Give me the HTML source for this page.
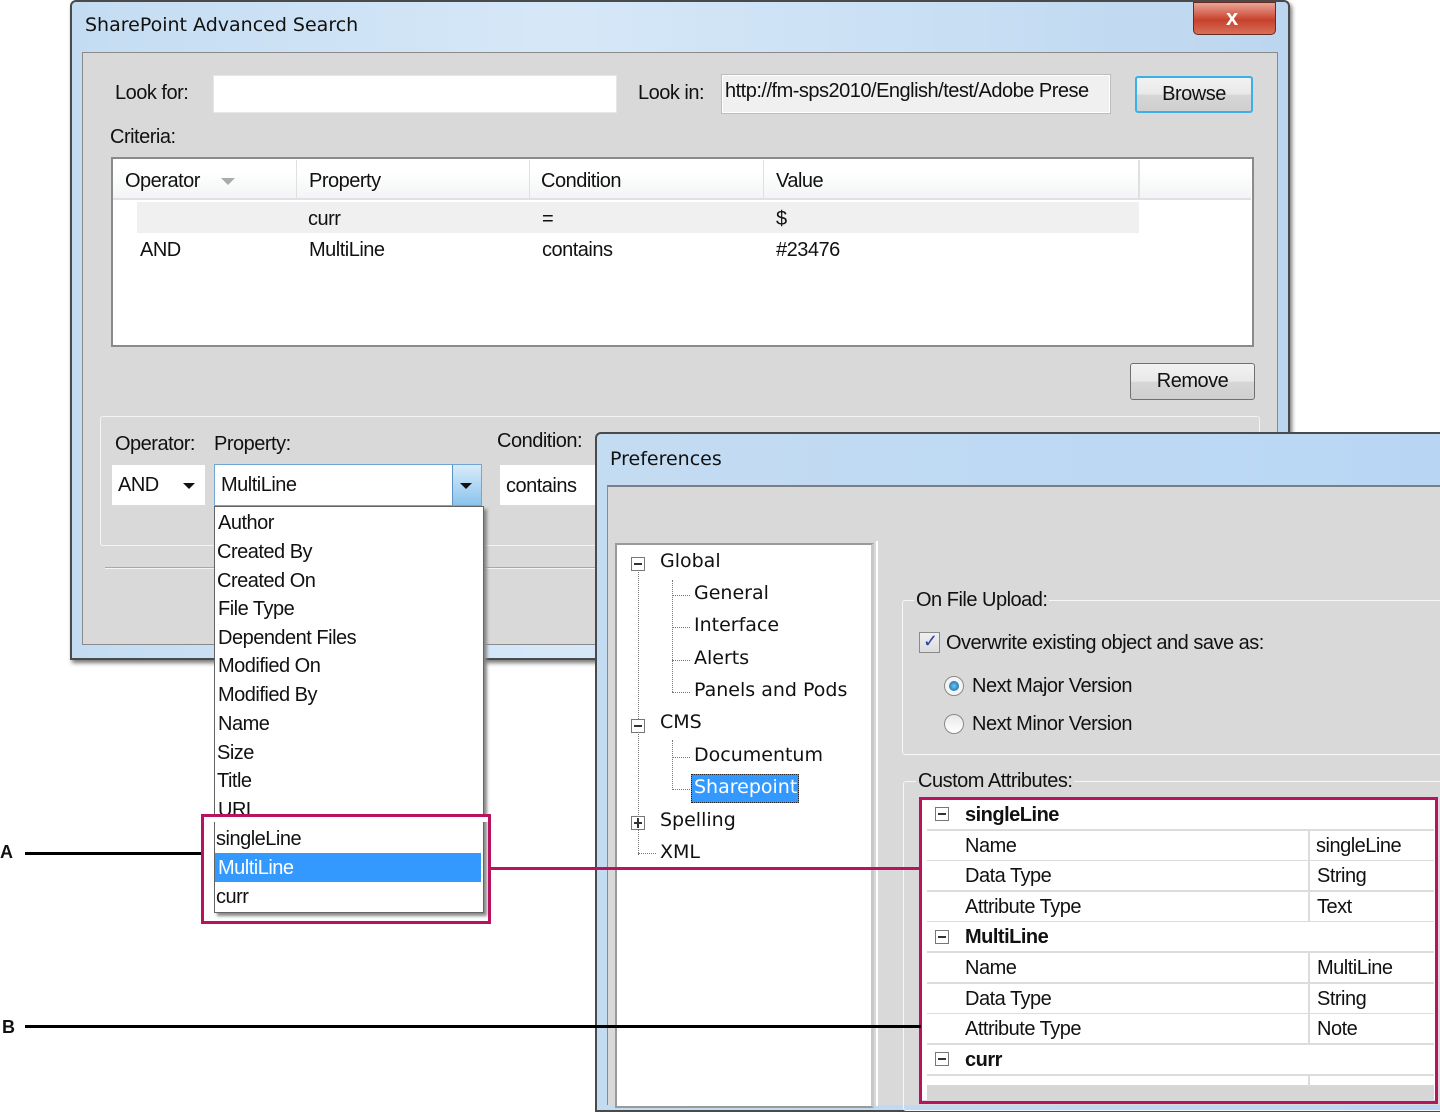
<!DOCTYPE html>
<html><head><meta charset="utf-8">
<style>
*{margin:0;padding:0;box-sizing:border-box}
body{width:1440px;height:1104px;background:#fff;position:relative;overflow:hidden;font-family:"Liberation Sans",sans-serif;font-size:20px;color:#111;letter-spacing:-0.5px}
.a{position:absolute}
.t{position:absolute;white-space:nowrap;line-height:1}
.w{background:#fff}
.btn{position:absolute;border:1px solid #707070;border-radius:3px;background:linear-gradient(#f2f2f2,#e8e8e8 50%,#d6d6d6 51%,#cfcfcf);text-align:center}
.tree{font-family:"DejaVu Sans",sans-serif;font-size:19px;letter-spacing:0;color:#111}
.row{position:absolute;left:927px;width:507px;height:31px;border-bottom:2px solid #dcdcdc;background:#fff}
.pm{position:absolute;width:14px;height:14px;border:1px solid #777;background:#fff}
.pm:after{content:"";position:absolute;left:2px;top:5px;width:8px;height:2px;background:#333}
</style></head><body>

<!-- Search window -->
<div class="a" style="left:70px;top:0;width:1220px;height:660px;background:linear-gradient(90deg,#c4dcf2,#d6e8f8 40%,#bcd6ef);border:2px solid #4a4a4a;border-radius:6px 6px 0 0;box-shadow:2px 3px 4px #777"></div>
<div class="t" style="left:85px;top:16px;letter-spacing:0;font-family:'DejaVu Sans',sans-serif;font-size:19px">SharePoint Advanced Search</div>
<div class="a" style="left:1193px;top:2px;width:83px;height:33px;border:1px solid #6b2a20;border-radius:0 0 5px 5px;background:linear-gradient(#e9a597,#c8412c 55%,#d5705a)"></div>
<div class="t" style="left:1226px;top:7px;color:#fff;font-weight:bold;font-size:22px">x</div>
<div class="a" style="left:82px;top:52px;width:1196px;height:593px;background:#d9d9d9;border:1px solid #8a8a8a"></div>

<div class="t" style="left:115px;top:83px">Look for:</div>
<div class="a w" style="left:213px;top:75px;width:404px;height:38px;border:1px solid #e6e6e6"></div>
<div class="t" style="left:638px;top:83px">Look in:</div>
<div class="a" style="left:722px;top:75px;width:388px;height:38px;background:#f0f0f0;border:1px solid #fff;outline:1px solid #bdbdbd"></div>
<div class="t" style="left:725px;top:81px;width:382px;overflow:hidden">http://fm-sps2010/English/test/Adobe Prese</div>
<div class="btn" style="left:1135px;top:76px;width:118px;height:37px;border:2px solid #3bb0e8;line-height:33px">Browse</div>
<div class="t" style="left:110px;top:127px">Criteria:</div>

<div class="a w" style="left:111px;top:157px;width:1143px;height:190px;border:2px solid #8a8a8a"></div>
<div class="a" style="left:113px;top:160px;width:1138px;height:40px;background:linear-gradient(#fff 30%,#f3f4f6);border-bottom:2px solid #dfe1e5"></div>
<div class="a" style="left:296px;top:160px;width:1px;height:40px;background:#e0e0e0"></div>
<div class="a" style="left:529px;top:160px;width:1px;height:40px;background:#e0e0e0"></div>
<div class="a" style="left:763px;top:160px;width:1px;height:40px;background:#e0e0e0"></div>
<div class="a" style="left:1138px;top:160px;width:2px;height:40px;background:#e0e0e0"></div>
<div class="t" style="left:125px;top:171px">Operator</div>
<div class="a" style="left:221px;top:178px;border:7px solid transparent;border-top:7px solid #aaa"></div>
<div class="t" style="left:309px;top:171px">Property</div>
<div class="t" style="left:541px;top:171px">Condition</div>
<div class="t" style="left:776px;top:171px">Value</div>
<div class="a" style="left:137px;top:202px;width:1002px;height:31px;background:#f0f0f0"></div>
<div class="t" style="left:308px;top:209px">curr</div>
<div class="t" style="left:542px;top:209px">=</div>
<div class="t" style="left:776px;top:209px">$</div>
<div class="t" style="left:140px;top:240px">AND</div>
<div class="t" style="left:309px;top:240px">MultiLine</div>
<div class="t" style="left:542px;top:240px">contains</div>
<div class="t" style="left:776px;top:240px">#23476</div>

<div class="btn" style="left:1130px;top:363px;width:125px;height:37px;line-height:35px">Remove</div>

<div class="a" style="left:100px;top:416px;width:1160px;height:130px;border:1px solid #f4f4f4;border-radius:3px"></div>
<div class="a" style="left:105px;top:567px;width:490px;height:2px;background:#a8a8a8;border-bottom:1px solid #f4f4f4"></div>
<div class="t" style="left:115px;top:434px">Operator:</div>
<div class="t" style="left:214px;top:434px">Property:</div>
<div class="t" style="left:497px;top:431px">Condition:</div>
<div class="a w" style="left:112px;top:465px;width:93px;height:40px"></div>
<div class="t" style="left:118px;top:475px">AND</div>
<div class="a" style="left:183px;top:483px;border:6px solid transparent;border-top:6px solid #111"></div>
<div class="a w" style="left:214px;top:464px;width:268px;height:42px;border:1px solid #6fa6d6"></div>
<div class="a" style="left:452px;top:465px;width:29px;height:40px;background:linear-gradient(#d8ecfa,#8cc4ec);border-left:1px solid #5d93c2"></div>
<div class="a" style="left:460px;top:483px;border:6px solid transparent;border-top:6px solid #111"></div>
<div class="t" style="left:221px;top:475px">MultiLine</div>
<div class="a w" style="left:500px;top:465px;width:95px;height:40px"></div>
<div class="t" style="left:506px;top:476px">contains</div>

<!-- Dropdown list -->
<div class="a w" style="left:214px;top:506px;width:270px;height:407px;border:1px solid #646464;box-shadow:3px 3px 3px #888"></div>
<div class="t" style="left:218px;top:513px">Author</div>
<div class="t" style="left:217px;top:542px">Created By</div>
<div class="t" style="left:217px;top:571px">Created On</div>
<div class="t" style="left:218px;top:599px">File Type</div>
<div class="t" style="left:218px;top:628px">Dependent Files</div>
<div class="t" style="left:218px;top:656px">Modified On</div>
<div class="t" style="left:218px;top:685px">Modified By</div>
<div class="t" style="left:218px;top:714px">Name</div>
<div class="t" style="left:217px;top:743px">Size</div>
<div class="t" style="left:217px;top:771px">Title</div>
<div class="a" style="left:218px;top:800px;width:60px;height:14px;overflow:hidden"><div class="t" style="left:0;top:0">URL</div></div>
<div class="a w" style="left:204px;top:814px;width:284px;height:8px"></div>
<div class="t" style="left:216px;top:829px">singleLine</div>
<div class="a" style="left:215px;top:853px;width:266px;height:29px;background:#3399ff"></div>
<div class="t" style="left:218px;top:858px;color:#fff">MultiLine</div>
<div class="t" style="left:216px;top:887px">curr</div>
<div class="a" style="left:201px;top:814px;width:290px;height:110px;border:3px solid #b8135e"></div>

<!-- Preferences window -->
<div class="a" style="left:595px;top:432px;width:850px;height:680px;background:linear-gradient(90deg,#c4dcf2,#b8d6f4);border:2px solid #4a4a4a;border-radius:6px 0 0 0"></div>
<div class="t tree" style="left:610px;top:450px">Preferences</div>
<div class="a" style="left:607px;top:485px;width:840px;height:620px;background:#d9d9d9;border-top:2px solid #7a7f86;border-left:1px solid #8a8a8a"></div>
<div class="a w" style="left:615px;top:543px;width:259px;height:565px;border:2px solid #9a9a9a;border-right:3px solid #c8c8c8"></div>
<div class="a" style="left:876px;top:541px;width:2px;height:565px;background:#fff"></div>
<!-- tree lines -->
<div class="a" style="left:638px;top:570px;width:0;height:285px;border-left:1px dotted #777"></div>
<div class="a" style="left:672px;top:580px;width:0;height:112px;border-left:1px dotted #777"></div>
<div class="a" style="left:672px;top:740px;width:0;height:50px;border-left:1px dotted #777"></div>
<div class="a" style="left:672px;top:595px;width:18px;border-top:1px dotted #777"></div>
<div class="a" style="left:672px;top:627px;width:18px;border-top:1px dotted #777"></div>
<div class="a" style="left:672px;top:660px;width:18px;border-top:1px dotted #777"></div>
<div class="a" style="left:672px;top:692px;width:18px;border-top:1px dotted #777"></div>
<div class="a" style="left:672px;top:757px;width:18px;border-top:1px dotted #777"></div>
<div class="a" style="left:672px;top:789px;width:18px;border-top:1px dotted #777"></div>
<div class="a" style="left:638px;top:853px;width:18px;border-top:1px dotted #777"></div>
<div class="pm" style="left:631px;top:557px"></div>
<div class="pm" style="left:631px;top:719px"></div>
<div class="pm" style="left:631px;top:816px"></div>
<div class="a" style="left:637px;top:818px;width:2px;height:10px;background:#333"></div>
<div class="t tree" style="left:660px;top:552px">Global</div>
<div class="t tree" style="left:694px;top:584px">General</div>
<div class="t tree" style="left:694px;top:616px">Interface</div>
<div class="t tree" style="left:694px;top:649px">Alerts</div>
<div class="t tree" style="left:694px;top:681px">Panels and Pods</div>
<div class="t tree" style="left:660px;top:713px">CMS</div>
<div class="t tree" style="left:694px;top:746px">Documentum</div>
<div class="a" style="left:691px;top:774px;width:108px;height:29px;background:#3399ff;border:1px dotted #222"></div>
<div class="t tree" style="left:694px;top:778px;color:#fff">Sharepoint</div>
<div class="t tree" style="left:660px;top:811px">Spelling</div>
<div class="t tree" style="left:660px;top:843px">XML</div>

<!-- On File Upload group -->
<div class="a" style="left:902px;top:600px;width:545px;height:155px;border:1px solid #f6f6f6;border-radius:3px"></div>
<div class="t" style="left:914px;top:590px;background:#d9d9d9;padding:0 2px">On File Upload:</div>
<div class="a" style="left:919px;top:632px;width:21px;height:21px;border:1px solid #8a8a8a;background:linear-gradient(#f0f0f0,#dcdcdc)"></div>
<div class="t" style="left:923px;top:632px;color:#2a3fa8;font-size:18px">✓</div>
<div class="t" style="left:946px;top:633px">Overwrite existing object and save as:</div>
<div class="a" style="left:944px;top:676px;width:20px;height:20px;border-radius:50%;border:1px solid #8a8a8a;background:#f4f4f4"></div>
<div class="a" style="left:949px;top:681px;width:10px;height:10px;border-radius:50%;background:radial-gradient(#6cc8f4,#0e5a96)"></div>
<div class="t" style="left:972px;top:676px">Next Major Version</div>
<div class="a" style="left:944px;top:714px;width:20px;height:20px;border-radius:50%;border:1px solid #8a8a8a;background:linear-gradient(#e8e8e8,#fff)"></div>
<div class="t" style="left:972px;top:714px">Next Minor Version</div>

<div class="a" style="left:903px;top:781px;width:545px;height:330px;border:1px solid #f6f6f6;border-radius:3px"></div>
<div class="t" style="left:916px;top:771px;background:#d9d9d9;padding:0 2px">Custom Attributes:</div>

<!-- property grid -->
<div class="a" style="left:921px;top:800px;width:514px;height:300px;background:#fff"></div>
<div class="row" style="top:800px"></div>
<div class="row" style="top:831px"></div>
<div class="row" style="top:861px"></div>
<div class="row" style="top:892px"></div>
<div class="row" style="top:922px"></div>
<div class="row" style="top:953px"></div>
<div class="row" style="top:984px"></div>
<div class="row" style="top:1014px"></div>
<div class="row" style="top:1045px"></div>
<div class="row" style="top:1076px;height:10px;border:none"></div>
<div class="a" style="left:927px;top:1085px;width:507px;height:15px;background:#d6d6d6"></div>
<div class="a" style="left:1308px;top:831px;width:2px;height:91px;background:#dcdcdc"></div>
<div class="a" style="left:1308px;top:953px;width:2px;height:91px;background:#dcdcdc"></div>
<div class="a" style="left:1308px;top:1076px;width:2px;height:10px;background:#dcdcdc"></div>
<div class="pm" style="left:935px;top:807px"></div>
<div class="pm" style="left:935px;top:930px"></div>
<div class="pm" style="left:935px;top:1052px"></div>
<div class="t" style="left:965px;top:805px;font-weight:bold">singleLine</div>
<div class="t" style="left:965px;top:836px">Name</div><div class="t" style="left:1316px;top:836px">singleLine</div>
<div class="t" style="left:965px;top:866px">Data Type</div><div class="t" style="left:1317px;top:866px">String</div>
<div class="t" style="left:965px;top:897px">Attribute Type</div><div class="t" style="left:1317px;top:897px">Text</div>
<div class="t" style="left:965px;top:927px;font-weight:bold">MultiLine</div>
<div class="t" style="left:965px;top:958px">Name</div><div class="t" style="left:1317px;top:958px">MultiLine</div>
<div class="t" style="left:965px;top:989px">Data Type</div><div class="t" style="left:1317px;top:989px">String</div>
<div class="t" style="left:965px;top:1019px">Attribute Type</div><div class="t" style="left:1317px;top:1019px">Note</div>
<div class="t" style="left:965px;top:1050px;font-weight:bold">curr</div>
<div class="a" style="left:919px;top:797px;width:519px;height:307px;border:3px solid #b8135e"></div>

<!-- callout lines (on top) -->
<div class="a" style="left:25px;top:852px;width:176px;height:3px;background:#000"></div>
<div class="t" style="left:0;top:843px;font-weight:bold;font-size:18px">A</div>
<div class="a" style="left:490px;top:867px;width:431px;height:3px;background:#b8135e"></div>
<div class="a" style="left:25px;top:1025px;width:896px;height:3px;background:#000"></div>
<div class="t" style="left:2px;top:1018px;font-weight:bold;font-size:18px">B</div>

</body></html>
